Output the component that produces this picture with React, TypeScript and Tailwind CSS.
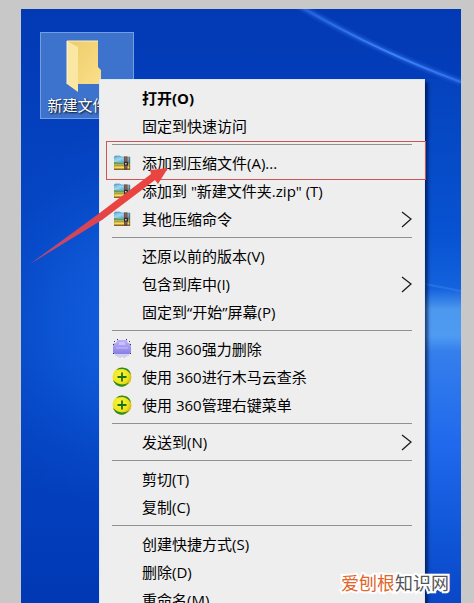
import React from 'react';

type IconName = 'archive' | 'shredder' | 'shield';

interface MenuEntry {
  label: string;
  icon?: IconName;
  bold?: boolean;
  submenu?: boolean;
}

const menuGroups: MenuEntry[][] = [
  [{ label: '打开(O)', bold: true }, { label: '固定到快速访问' }],
  [
    { label: '添加到压缩文件(A)...', icon: 'archive' },
    { label: '添加到 "新建文件夹.zip" (T)', icon: 'archive' },
    { label: '其他压缩命令', icon: 'archive', submenu: true },
  ],
  [
    { label: '还原以前的版本(V)' },
    { label: '包含到库中(I)', submenu: true },
    { label: '固定到“开始”屏幕(P)' },
  ],
  [
    { label: '使用 360强力删除', icon: 'shredder' },
    { label: '使用 360进行木马云查杀', icon: 'shield' },
    { label: '使用 360管理右键菜单', icon: 'shield' },
  ],
  [{ label: '发送到(N)', submenu: true }],
  [{ label: '剪切(T)' }, { label: '复制(C)' }],
  [{ label: '创建快捷方式(S)' }, { label: '删除(D)' }, { label: '重命名(M)' }],
];

const ArchiveIcon = () => (
  <svg width="20" height="20" viewBox="0 0 20 20" aria-hidden="true">
    <defs>
      <linearGradient id="archiveTop" x1="0" y1="0" x2="1" y2="1">
        <stop offset="0" stopColor="#5aa6d2" />
        <stop offset="0.4" stopColor="#9cd8f2" />
        <stop offset="1" stopColor="#2f7fb4" />
      </linearGradient>
    </defs>
    <path d="M2 5l1-2h5l1 1h9v6H2z" fill="url(#archiveTop)" />
    <path d="M2 5l1-2h5l1 1h9" fill="none" stroke="#4488b4" strokeWidth="0.6" />
    <path d="M2 9l8 1h8v3H2z" fill="#6a9c4c" />
    <path d="M2 11h16v1.5H2z" fill="#a9b452" />
    <path d="M2 12.5h16V17H2z" fill="#cd9a30" />
    <path d="M2.5 13.5h15v1.5h-15z" fill="#f2dc70" />
    <path d="M2 16.5h16M17.7 4v13" stroke="#6b5a34" strokeWidth="0.8" />
    <path d="M12 3.5h3.5V17H12z" fill="#6e4a3c" />
    <path d="M12.8 5h2M12.8 7h2M12.8 14h2" stroke="#a88474" strokeWidth="0.8" />
    <path d="M12 9h4v3.5h-4z" fill="#2b2828" />
    <path d="M13 10h1.6v1.4H13z" fill="#d9d0bc" />
  </svg>
);

const ShredderIcon = () => (
  <svg width="20" height="20" viewBox="0 0 20 20" aria-hidden="true">
    <defs>
      <linearGradient id="shredder" x1="0" y1="0" x2="0" y2="1">
        <stop offset="0" stopColor="#b9b1f8" />
        <stop offset="0.5" stopColor="#a49af2" />
        <stop offset="1" stopColor="#887ee0" />
      </linearGradient>
    </defs>
    <path d="M5 2q0-1 1-1h8q1 0 1 1l1 2q3 0 3 2v7q0 2-2 2H3q-2 0-2-2V6q0-2 3-2z" fill="url(#shredder)" />
    <path d="M7 3h6v3H7z" fill="#c9c3fd" />
    <path d="M4 9h12" stroke="#b9b2fa" strokeWidth="1.5" />
    <path d="M4 15v2M6 15v3M8 15v4M10 15v3M12 15v4M14 15v3M16 15v2" stroke="#b5aef0" />
    <path d="M5 0h1v1H5zM14 0h1v1h-1zM2 2h1v1H2zM17 2h1v1h-1zM1 5h1v1H1zM18 5h1v1h-1zM1 14h1v1H1zM18 14h1v1h-1z" fill="#35304e" />
  </svg>
);

const ShieldIcon = () => (
  <svg width="20" height="20" viewBox="0 0 20 20" aria-hidden="true">
    <defs>
      <radialGradient id="shield" cx="0.4" cy="0.4" r="0.6">
        <stop offset="0" stopColor="#fbf53a" />
        <stop offset="0.7" stopColor="#efe31c" />
        <stop offset="1" stopColor="#d6bf10" />
      </radialGradient>
    </defs>
    <circle cx="10" cy="10" r="9.5" fill="url(#shield)" />
    <path d="M4 3Q8-.5 13 1q5 1 6 7-3-5-8-6-4 0-7 1z" fill="#2c8c22" />
    <path d="M1 13q4 4 9 4.500 4 0 7-2-4 5-9 4-5-1-7-6.500z" fill="#2c8c22" />
    <path d="M10 5.500v9M5.500 10h9" stroke="#17701c" strokeWidth="1.800" />
  </svg>
);

const icons: Record<IconName, React.FC> = {
  archive: ArchiveIcon,
  shredder: ShredderIcon,
  shield: ShieldIcon,
};

const MenuItem: React.FC<{ entry: MenuEntry }> = ({ entry }) => {
  const Icon = entry.icon ? icons[entry.icon] : null;
  return (
    <button
      role="menuitem"
      className={`flex h-7 w-full items-center gap-2.5 pl-3 pr-3 text-left text-[15px] leading-5 text-black hover:bg-white ${entry.bold ? 'font-bold' : ''}`}
    >
      <span className="w-5 shrink-0">{Icon && <Icon />}</span>
      <span className="flex-1 whitespace-nowrap">{entry.label}</span>
      {entry.submenu && (
        <svg width="11" height="18" viewBox="0 0 11 18" fill="none" stroke="#1c1c1c" strokeWidth="1.3" aria-hidden="true">
          <path d="M1 2l9 7-9 8" />
        </svg>
      )}
    </button>
  );
};

const Wallpaper = () => (
  <svg className="absolute inset-0 h-full w-full" viewBox="0 0 440 594" preserveAspectRatio="none" aria-hidden="true">
    <defs>
      <linearGradient id="base" x1="0" y1="0" x2="0" y2="1">
        <stop offset="0" stopColor="#0339b4" />
        <stop offset="0.25" stopColor="#0442c0" />
        <stop offset="0.6" stopColor="#0648c8" />
        <stop offset="1" stopColor="#0138b4" />
      </linearGradient>
      <radialGradient id="glow" gradientUnits="userSpaceOnUse" cx="130" cy="310" r="200">
        <stop offset="0" stopColor="#1764e4" />
        <stop offset="0.5" stopColor="#0e58d6" stopOpacity="0.75" />
        <stop offset="1" stopColor="#0546c6" stopOpacity="0" />
      </radialGradient>
      <linearGradient id="edge" gradientUnits="userSpaceOnUse" x1="0" y1="70" x2="0" y2="594">
        <stop offset="0" stopColor="#0542bd" />
        <stop offset="0.3" stopColor="#0753d2" />
        <stop offset="0.4" stopColor="#1462dd" />
        <stop offset="0.44" stopColor="#4c98ef" />
        <stop offset="0.49" stopColor="#4f9bf2" />
        <stop offset="0.52" stopColor="#347fec" />
        <stop offset="0.7" stopColor="#2068ec" />
        <stop offset="0.85" stopColor="#1158da" />
        <stop offset="1" stopColor="#0947c6" />
      </linearGradient>
      <linearGradient id="streak" x1="0" y1="0" x2="1" y2="0">
        <stop offset="0" stopColor="#1f5edc" />
        <stop offset="0.6" stopColor="#3f84f6" />
        <stop offset="1" stopColor="#2e70ea" />
      </linearGradient>
    </defs>
    <path d="M0 0h440v594H0z" fill="url(#base)" />
    <path d="M0 0h440v594H0z" fill="url(#glow)" />
    <path d="M400 70h40v524h-40z" fill="url(#edge)" />
    <path d="M270-8Q350 40 440 73" fill="none" stroke="#1f5fdc" strokeWidth="9" opacity="0.25" />
    <path d="M270-8Q350 40 440 73" fill="none" stroke="#2867e2" strokeWidth="5" opacity="0.45" />
    <path d="M270-8Q350 40 440 73" fill="none" stroke="url(#streak)" strokeWidth="2" />
    <path d="M404 275l36 7" stroke="#3c83ee" strokeWidth="2" opacity="0.5" />
  </svg>
);

const FolderShortcut = () => (
  <button className="relative ml-[19px] mt-[23px] flex h-[87px] w-[94px] flex-col items-center border border-[#729fe4] bg-[#3d72cd] pr-1 pt-1.5">
    <svg width="40" height="56" viewBox="0 0 40 56" aria-hidden="true">
      <defs>
        <linearGradient id="folder" x1="0" y1="0" x2="1" y2="1">
          <stop offset="0" stopColor="#eccb69" />
          <stop offset="1" stopColor="#fbe08a" />
        </linearGradient>
      </defs>
      <path d="M2 2h31v26l3 3v14H11z" fill="url(#folder)" />
      <path d="M2 2l11 6v45L2 45z" fill="#fbe7a4" />
      <path d="M2 2h31" stroke="#fff0bd" />
      <path d="M2 2v43" stroke="#fff4cd" />
    </svg>
    <span className="whitespace-nowrap text-[15px] leading-5 text-white [text-shadow:1px_1px_2px_#000]">新建文件夹</span>
  </button>
);

const ContextMenu = () => (
  <div
    role="menu"
    className="absolute left-[78px] right-9 top-[70px] border border-[#dbe7f5] bg-[#eeeeee] pb-1 pt-1 shadow-[3px_3px_3px_rgba(0,0,30,0.55)]"
  >
    {menuGroups.map((group, idx) => (
      <React.Fragment key={idx}>
        {idx > 0 && <hr className="my-1 ml-3 mr-3 border-t border-[#919191]" />}
        {group.map((entry) => (
          <MenuItem key={entry.label} entry={entry} />
        ))}
      </React.Fragment>
    ))}
  </div>
);

// Red box and arrow pointing at the "add to archive" entry
const Annotation = () => (
  <>
    <div className="pointer-events-none absolute left-[85px] right-[35px] top-[132px] h-[39px] border border-[#cf5555]" />
    <svg className="pointer-events-none absolute left-[9px] top-[158px]" width="140" height="100" viewBox="0 0 140 100" aria-hidden="true">
      <defs>
        <linearGradient id="arrow" x1="0" y1="1" x2="1" y2="0">
          <stop offset="0" stopColor="#b64a78" />
          <stop offset="0.45" stopColor="#dc4452" />
          <stop offset="0.6" stopColor="#ea4440" />
        </linearGradient>
      </defs>
      <path d="M0 97L67 48 121 7 120 3 138 1 128 17 125 13 72 53z" fill="url(#arrow)" />
    </svg>
  </>
);

export default function App() {
  return (
    <div className="flex h-screen flex-col overflow-hidden bg-[#c8c8c8] pl-[21px] pr-[13px] pt-[9px] font-['Open_Sans','Noto_Sans_CJK_SC',sans-serif]">
      <main className="relative flow-root flex-1 overflow-hidden">
        <Wallpaper />
        <FolderShortcut />
        <ContextMenu />
        <Annotation />
        <p className="absolute bottom-2 right-3 whitespace-nowrap text-lg leading-6 text-[#555555] [-webkit-text-stroke:4px_white] [paint-order:stroke_fill]">
          <span className="text-[#e0662b]">爱刨根</span>知识网
        </p>
      </main>
    </div>
  );
}
